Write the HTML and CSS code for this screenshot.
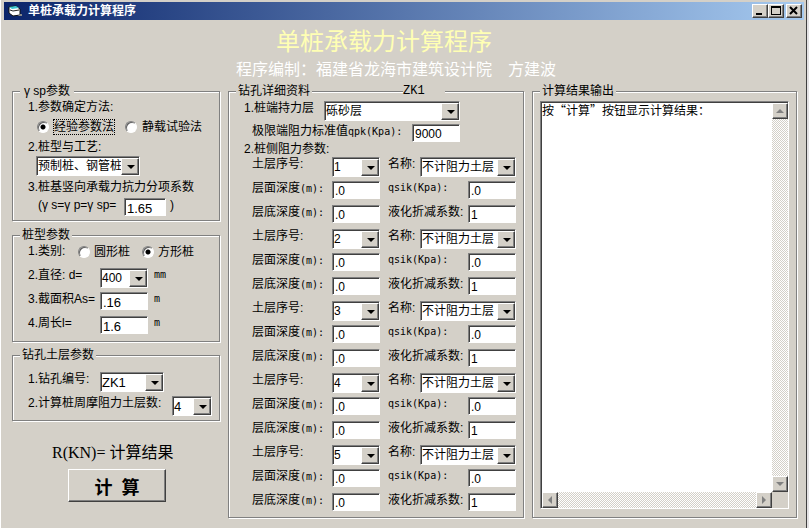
FILE: index.html
```html
<!DOCTYPE html>
<html lang="zh-CN">
<head>
    <meta charset="UTF-8">
    <meta name="viewport" content="width=device-width, initial-scale=1.0">
    <title>单桩承载力计算程序</title>
    <link rel="stylesheet" href="styles.css">
</head>
<body>
    <div class="window">
        <div class="titlebar">
            <svg class="app-icon" width="14" height="12" viewBox="0 0 14 12">
                <path d="M1 2l7-1 4 3v6l-7 1-4-3z" fill="#fff" stroke="#111" stroke-width="1"/>
                <path d="M1 2l7-1 3 2-7 1z" fill="#3cc6d2"/>
                <path d="M2 5l3 1 6-1" fill="none" stroke="#222"/>
                <path d="M12 9h2v2h-4z" fill="#888"/>
            </svg>
            <span class="caption">单桩承载力计算程序</span>
            <button class="win-btn" aria-label="最小化"><svg width="12" height="10" viewBox="0 0 12 10"><path d="M2 7h6v2H2z"/></svg></button>
            <button class="win-btn" aria-label="最大化"><svg width="12" height="10" viewBox="0 0 12 10"><path d="M1 0h10v9H1zM2 2v6h8V2z" fill-rule="evenodd"/></svg></button>
            <button class="win-btn close" aria-label="关闭"><svg width="12" height="10" viewBox="0 0 12 10"><path d="M2 1l7 7M9 1l-7 7" fill="none" stroke="#000" stroke-width="2"/></svg></button>
        </div>

        <header class="header">
            <h1>单桩承载力计算程序</h1>
            <p>程序编制：福建省龙海市建筑设计院　方建波</p>
        </header>

        <main class="panels">
            <div class="left">
                <fieldset class="group method">
                    <legend class="wide">γ sp参数</legend>
                    <div class="line">1.参数确定方法:</div>
                    <div class="radios">
                        <label><input type="radio" name="method" checked><span class="focused">经验参数法</span></label>
                        <label><input type="radio" name="method"><span>静载试验法</span></label>
                    </div>
                    <label class="line" for="craft">2.桩型与工艺:</label>
                    <div class="combo craft"><select id="craft"><option>预制桩、钢管桩</option></select></div>
                    <label class="line tall" for="factor">3.桩基竖向承载力抗力分项系数</label>
                    <div class="factor">
                        <label for="factor">(γ s=γ p=γ sp=</label>
                        <input type="text" id="factor" class="big" value="1.65">
                        <span>)</span>
                    </div>
                </fieldset>

                <fieldset class="group pile">
                    <legend>桩型参数</legend>
                    <div class="row">
                        <span class="kind">1.类别:</span>
                        <label class="shape"><input type="radio" name="shape">圆形桩</label>
                        <label class="shape"><input type="radio" name="shape" checked>方形桩</label>
                    </div>
                    <div class="row">
                        <label class="name" for="diameter">2.直径: d=</label>
                        <div class="combo field"><select id="diameter"><option>400</option></select></div>
                        <span class="unit">mm</span>
                    </div>
                    <div class="row">
                        <label class="name" for="area">3.截面积As=</label>
                        <input type="text" id="area" class="field big" value=".16">
                        <span class="unit">m</span>
                    </div>
                    <div class="row">
                        <label class="name" for="perimeter">4.周长l=</label>
                        <input type="text" id="perimeter" class="field big" value="1.6">
                        <span class="unit">m</span>
                    </div>
                </fieldset>

                <fieldset class="group hole">
                    <legend>钻孔土层参数</legend>
                    <div class="row">
                        <label class="name" for="holeNo">1.钻孔编号:</label>
                        <div class="combo big hole-no"><select id="holeNo"><option>ZK1</option></select></div>
                    </div>
                    <div class="row">
                        <label class="count-name" for="layerCount">2.计算桩周摩阻力土层数:</label>
                        <div class="combo big layer-count"><select id="layerCount"><option>4</option></select></div>
                    </div>
                </fieldset>

                <div class="result">R(KN)= 计算结果</div>
                <button class="calc">计&ensp;算</button>
            </div>

            <fieldset class="group detail">
                <legend>钻孔详细资料</legend>
                <span class="hole-name">ZK1</span>
                <div class="bearing">
                    <label for="bearing">1.桩端持力层</label>
                    <div class="combo"><select id="bearing"><option>砾砂层</option></select></div>
                </div>
                <div class="limit">
                    <label for="qpk">极限端阻力标准值<span class="mono">qpk(Kpa):</span></label>
                    <input type="text" id="qpk" value="9000">
                </div>
                <div class="line">2.桩侧阻力参数:</div>
                <div id="layers" class="layers"></div>
            </fieldset>

            <fieldset class="group output">
                <legend>计算结果输出</legend>
                <div class="memo">
                    <textarea aria-label="计算结果输出" wrap="off">按“计算”按钮显示计算结果：</textarea>
                    <div class="vbar">
                        <button class="scroll-btn" aria-label="上"><svg width="8" height="8" viewBox="0 0 8 8"><path d="M0 6h8L4 2z"/></svg></button>
                        <button class="scroll-btn" aria-label="下"><svg width="8" height="8" viewBox="0 0 8 8"><path d="M0 2h8L4 6z"/></svg></button>
                    </div>
                    <div class="hbar">
                        <button class="scroll-btn" aria-label="左"><svg width="8" height="8" viewBox="0 0 8 8"><path d="M6 0v8L2 4z"/></svg></button>
                        <button class="scroll-btn" aria-label="右"><svg width="8" height="8" viewBox="0 0 8 8"><path d="M2 0v8l4-4z"/></svg></button>
                    </div>
                </div>
            </fieldset>
        </main>
    </div>

    <script src="script.js"></script>
</body>
</html>
```

FILE: styles.css
```css
* {
    box-sizing: border-box;
}

body {
    margin: 0;
    padding-right: 2px;
    background-color: #e4e2e4;
    font-family: "Liberation Sans", "Noto Sans CJK SC", sans-serif;
    font-size: 12px;
    line-height: 14px;
    color: #000;
}

.window {
    min-height: 100vh;
    padding: 2px 2px 8px 3px;
    background-color: #d4d0c8;
    border-left: 1px solid #fff;
    border-right: 1px solid #404040;
}

/* title bar */
.titlebar {
    display: flex;
    align-items: center;
    height: 18px;
    padding: 0 2px 0 4px;
    background: linear-gradient(to right, #0a246a, #a6caf0);
}

.caption {
    flex: 1;
    margin-left: 6px;
    color: #fff;
    font-weight: bold;
}

.win-btn {
    display: flex;
    align-items: center;
    justify-content: center;
    width: 16px;
    height: 14px;
}

.win-btn.close {
    margin-left: 2px;
}

button {
    padding: 0;
    font-family: inherit;
    background-color: #d4d0c8;
    border: 1px solid;
    border-color: #fff #404040 #404040 #fff;
    box-shadow: inset -1px -1px #808080;
}

/* heading */
.header {
    padding: 8px 0 4px 232px;
}

.header h1 {
    margin: 0 0 4px 40px;
    font-size: 24px;
    line-height: 28px;
    font-weight: normal;
    color: #ffffb4;
}

.header p {
    margin: 0;
    font-size: 16px;
    line-height: 20px;
    color: #fff;
}

/* group boxes */
.panels {
    display: grid;
    grid-template-columns: 208px 296px minmax(0, 1fr);
    gap: 8px;
    padding: 0 7px 0 8px;
}

.group {
    min-width: 0;
    margin: 0;
    padding: 2px 7px 4px 15px;
    border: 1px solid #808080;
    box-shadow: inset 1px 1px #fff, 1px 1px #fff;
}

legend {
    margin-left: -8px;
    padding: 0 2px;
    background-color: #d4d0c8;
}

legend.wide {
    padding: 0 4px;
}

label,
.line,
.unit {
    white-space: nowrap;
}

.line {
    display: block;
}

/* inputs */
input[type="text"],
.combo,
.memo {
    background-color: #fff;
    border: 1px solid;
    border-color: #808080 #fff #fff #808080;
    box-shadow: inset 1px 1px #404040;
}

input[type="text"] {
    width: 48px;
    height: 18px;
    padding: 2px 0 0 2px;
    border-radius: 0;
    font-family: inherit;
    font-size: 12px;
    color: #000;
}

.combo {
    position: relative;
    width: 48px;
    height: 20px;
}

.combo select {
    width: 100%;
    height: 100%;
    padding: 0 0 0 1px;
    appearance: none;
    border: none;
    background: transparent;
    font-family: inherit;
    font-size: 12px;
    color: #000;
}

/* drop-down button over the right end of the select */
.combo::before {
    content: "";
    position: absolute;
    top: 1px;
    right: 0;
    bottom: 0;
    width: 16px;
    background-color: #d4d0c8;
    border: 1px solid;
    border-color: #fff #404040 #404040 #fff;
    box-shadow: inset -1px -1px #808080;
    pointer-events: none;
}

.combo::after {
    content: "";
    position: absolute;
    top: 8px;
    right: 4px;
    border: 4px solid transparent;
    border-top-color: #000;
    border-bottom: none;
    pointer-events: none;
}

input[type="text"].big,
.combo.big select {
    font-size: 13px;
}

input[type="radio"] {
    flex: none;
    width: 12px;
    height: 12px;
    margin: 0;
    appearance: none;
    border: 1px solid;
    border-color: #808080 #fff #fff #808080;
    border-radius: 50%;
    background-color: #fff;
    box-shadow: inset 1px 1px #606060;
}

input[type="radio"]:checked {
    background-image: radial-gradient(circle, #000 2px, transparent 3px);
}

/* left column */
.method {
    display: flex;
    flex-direction: column;
    gap: 2px;
}

.radios {
    display: flex;
    align-items: center;
    height: 22px;
    gap: 10px;
    padding-left: 9px;
}

.radios label {
    display: flex;
    align-items: center;
    gap: 4px;
}

.radios span {
    border: 1px dotted transparent;
}

.radios .focused {
    border-color: #000;
}

.craft {
    width: 104px;
    margin-left: 8px;
}

.tall {
    line-height: 18px;
}

.factor {
    display: flex;
    gap: 4px;
    padding-left: 10px;
}

.factor label {
    width: 82px;
}

.factor input[type="text"] {
    width: 42px;
}

.row {
    display: flex;
    height: 24px;
}

.pile {
    margin-top: 7px;
    padding-bottom: 1px;
}

.kind {
    width: 50px;
}

.shape {
    display: flex;
    align-items: center;
    gap: 4px;
    height: 16px;
    width: 64px;
}

.name {
    width: 72px;
}

.unit {
    margin-left: 6px;
}

.hole {
    margin-top: 6px;
    padding-top: 10px;
    padding-bottom: 0;
}

.hole-no {
    width: 64px;
}

.count-name {
    width: 144px;
}

.layer-count {
    width: 40px;
}

.result {
    margin: 22px 0 6px 40px;
    font-family: "Liberation Serif", "Noto Sans CJK SC", serif;
    font-size: 16px;
    line-height: 20px;
}

.calc {
    width: 98px;
    height: 33px;
    margin-left: 56px;
    font-size: 18px;
    font-weight: bold;
}

/* middle column */
.detail {
    position: relative;
    padding: 3px 7px 0 15px;
}

/* sits over the top line of the group box */
.hole-name {
    position: absolute;
    top: -14px;
    left: 174px;
    width: 42px;
    background-color: #d4d0c8;
    font-family: "Liberation Mono", monospace;
}

.mono,
.unit {
    font-family: "DejaVu Sans Mono", monospace;
    font-size: 10px;
}

.bearing,
.limit {
    display: flex;
    margin-bottom: 3px;
}

.bearing label {
    width: 80px;
}

.bearing .combo {
    width: 136px;
}

.limit {
    margin: 0;
    padding-left: 8px;
}

.limit label {
    width: 160px;
}

.layers {
    padding: 1px 0 0 8px;
}

.layers .row > :first-child {
    width: 80px;
}

.layers .second {
    flex: 1;
    min-width: 0;
    margin-left: 8px;
}

.layers .soil {
    width: 96px;
}

/* right column */
.output {
    display: flex;
    padding: 3px 7px 8px;
}

.output legend {
    margin-left: 0;
}

.memo {
    flex: 1;
    display: grid;
    grid-template-columns: minmax(0, 1fr) 16px;
    grid-template-rows: 1fr 16px;
    padding: 1px 0 0 1px;
    background-color: #d4d0c8;
}

.memo textarea {
    width: 100%;
    height: 100%;
    padding: 0;
    border: none;
    resize: none;
    overflow: hidden;
    font-family: "Noto Sans CJK SC", sans-serif;
    font-size: 12px;
    line-height: 14px;
    color: #000;
}

.vbar,
.hbar {
    display: flex;
    justify-content: space-between;
    background: repeating-conic-gradient(#d4d0c8 0 25%, #fff 0 50%) 0 0 / 2px 2px;
}

.vbar {
    flex-direction: column;
}

.scroll-btn {
    display: flex;
    align-items: center;
    justify-content: center;
    width: 16px;
    height: 16px;
}

.scroll-btn path {
    fill: #808080;
}
```

FILE: script.js
```js
const layers = document.getElementById('layers');

for (let i = 1; i <= 5; i++) {
    layers.insertAdjacentHTML('beforeend', `
        <div class="row">
            <label for="no${i}">土层序号:</label>
            <div class="combo"><select id="no${i}"><option>${i}</option></select></div>
            <label class="second" for="soil${i}">名称:</label>
            <div class="combo soil"><select id="soil${i}"><option>不计阻力土层</option></select></div>
        </div>
        <div class="row">
            <label for="top${i}">层面深度<span class="mono">(m):</span></label>
            <input type="text" id="top${i}" value=".0">
            <label class="second mono" for="qsik${i}">qsik(Kpa):</label>
            <input type="text" id="qsik${i}" value=".0">
        </div>
        <div class="row">
            <label for="bottom${i}">层底深度<span class="mono">(m):</span></label>
            <input type="text" id="bottom${i}" value=".0">
            <label class="second" for="ratio${i}">液化折减系数:</label>
            <input type="text" id="ratio${i}" value="1">
        </div>
    `);
}
```
